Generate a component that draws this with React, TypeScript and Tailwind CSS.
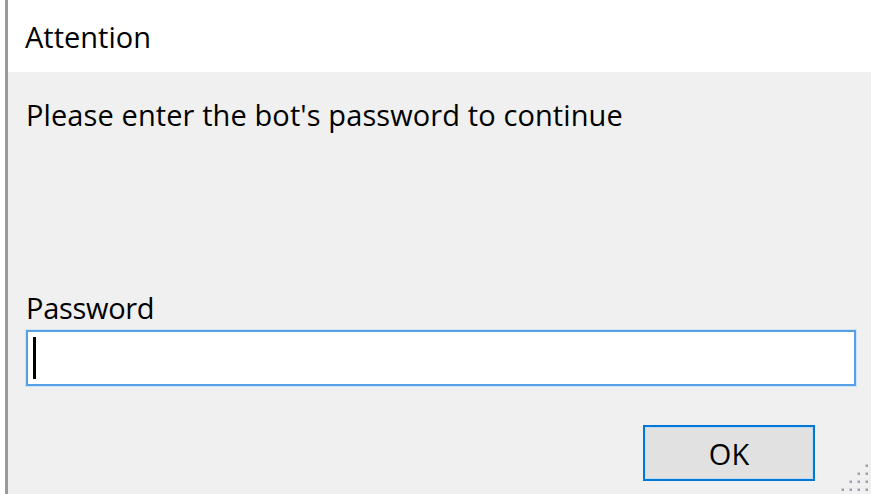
import React from 'react'

const Grip: React.FC = () => {
  const dots: [number, number][] = []
  for (let r = 0; r < 4; r++) {
    for (let c = 3 - r; c < 4; c++) {
      dots.push([c * 8, r * 8])
    }
  }
  return (
    <svg width="32" height="32" viewBox="0 0 32 32" className="absolute right-0 bottom-0">
      {dots.map(([x, y], i) => (
        <g key={i}>
          <rect x={x + 2} y={y + 2} width="3" height="3" fill="#c9cdd3" />
          <rect x={x + 3} y={y + 3} width="2" height="2" fill="#9aa3ad" />
        </g>
      ))}
    </svg>
  )
}

const App: React.FC = () => {
  return (
    <div
      className="w-[871px] h-[494px] flex bg-white overflow-hidden text-black"
      style={{ fontFamily: '"Open Sans", "Noto Sans", sans-serif' }}
    >
      <div className="w-[5px] bg-white" />
      <div className="w-[3px] bg-[#9a9a9a]" />
      <div className="flex-1 flex flex-col">
        <div className="h-[72px] bg-white pl-[17px] pt-[19px]">
          <p className="text-[29px] leading-[36px]">Attention</p>
        </div>
        <div className="relative flex-1 bg-[#f0f0f0] pl-[18px] pr-[15px] pt-[25px]">
          <p className="text-[29px] leading-[36px] tracking-[0.1px]">Please enter the bot's password to continue</p>
          <p className="text-[29px] leading-[36px] mt-[157px] tracking-[-0.3px]">Password</p>
          <div className="mt-[4px] h-[56px] bg-white border-2 border-[#56a0e8] shadow-[0_0_0_1px_#cfe3f7] flex items-center pl-[5px]">
            <div className="w-[3px] h-[42px] bg-black" />
          </div>
          <div className="flex justify-end pr-[41px] mt-[39px]">
            <button className="w-[172px] h-[56px] bg-[#e1e1e1] border-2 border-[#0078d7] shadow-[inset_0_0_0_1px_#c4dcf2] text-[29px] leading-none flex items-center justify-center">
              OK
            </button>
          </div>
          <Grip />
        </div>
      </div>
    </div>
  )
}

export default App
